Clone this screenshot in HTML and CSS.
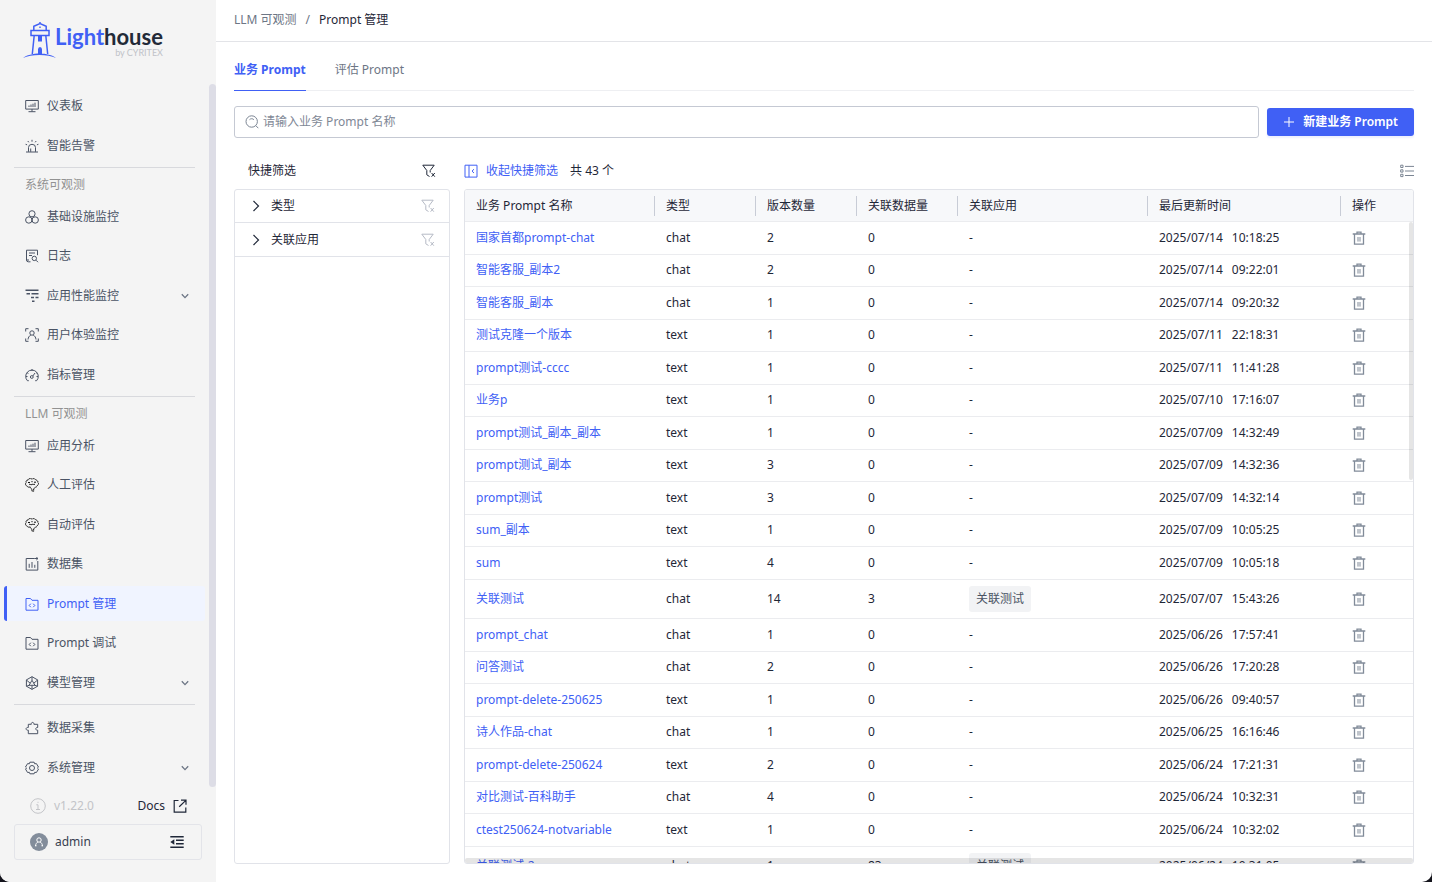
FILE: index.html
```html
<!DOCTYPE html>
<html lang="zh-CN">
<head>
<meta charset="utf-8">
<title>Prompt 管理</title>
<link rel="stylesheet" href="styles.css">
</head>
<body>
<svg class="sprite" aria-hidden="true">
  <symbol id="i-monitor" viewBox="0 0 14 14"><path d="M.7 1.500h12.600v8.600H.7zM7 10.100v2.400M3.500 12.700h7M4 8V6.500M6 8V5.500M8 8V4.700M10 8V3.700"/></symbol>
  <symbol id="i-alarm" viewBox="0 0 14 14"><path d="M1 13h12M3.500 12.800V8.500a3.500 3.200 0 0 1 7 0v4.300M5.700 12.800V9.500M7 .8v1.900M2.800 2l1 1.300M11.200 2l-1 1.300M.6 5.300l1.500.5M13.400 5.300l-1.500.5"/></symbol>
  <symbol id="i-circles" viewBox="0 0 14 14"><circle cx="7" cy="3.800" r="3.100"/><circle cx="3.800" cy="10" r="3.200"/><circle cx="10.200" cy="10" r="3.200"/></symbol>
  <symbol id="i-log" viewBox="0 0 14 14"><path d="M5.500 12.800H3.300a1.800 1.800 0 0 1-1.800-1.800V1.200h11v5M1.500 11H4M4 4h6M4 6.500h3M11 11.200l2 2"/><circle cx="9.300" cy="9.400" r="2.200"/></symbol>
  <symbol id="i-trace" viewBox="0 0 14 14"><path stroke-width="1.500" d="M.5 1.200h13M1.500 4.800h3.500M6.500 4.800h7M6 8.500h3M10.500 8.500h3M7 12.200h2.500"/></symbol>
  <symbol id="i-userscan" viewBox="0 0 14 14"><path d="M.7 3.500V.7h2.800M10.500.7h2.800v2.800M13.300 10.500v2.800h-2.800M3.500 13.300H.7v-2.800M3 11.500c.2-2 1.200-3.700 2.800-4.400M11 11.500c-.2-2-1.200-3.700-2.800-4.400"/><circle cx="7" cy="5" r="2.200"/></symbol>
  <symbol id="i-gauge" viewBox="0 0 14 14"><path d="M3.800 12.700H2.400a6.300 6.300 0 1 1 9.200 0h-1.400M7 1v2M2 4.700l1.400.8M12 4.700l-.8.500M1 8.500h1.500M13 8.500h-1.500M7.800 8l2.200-3"/><circle cx="6.800" cy="9" r="1.400"/></symbol>
  <symbol id="i-brain" viewBox="0 0 14 14"><path stroke-dasharray="1.600 .4" d="M7 1.200C5.500 0 3.500.6 3.200 1.900 1.500 1.900.6 3.300 1.200 4.500-.1 5.700.5 7.700 2 7.900c.4 1.300 2 1.700 3.200.9.200 1.600 1 2.200 1.800 2.300v2.100h1.700v-2.500c1-.3 1.500-.9 1.600-1.700 1.300.1 2.100-.7 2.100-1.700 1.500-.5 1.500-2.300.4-3 .3-1.300-.7-2.300-2-2.200C10.200.6 8.300.1 7 1.200z"/><path d="M3 4.500h2M4 6.500c1-.7 1.800.7 3 0s1.500.5 3-.3M9 4.200h2M7 3v1.200"/></symbol>
  <symbol id="i-dataset" viewBox="0 0 14 14"><path d="M9 1.500H1.200v11.600h11.600V4M9.200 1.500h3.600M11.300.2l1.700 1.300L11.300 3M4.200 6.800v4M7 5v5.800M9.800 7.800v3"/></symbol>
  <symbol id="i-folder" viewBox="0 0 14 14"><path d="M1 1.500h4.500L7 3.300h6v9.900H1zM5.800 6.700L4.200 8.500l1.600 1.700M8.200 6.700l1.600 1.800-1.600 1.700"/></symbol>
  <symbol id="i-cube" viewBox="0 0 14 14"><path d="M7 .7l5.600 3.200v6.300L7 13.400l-5.600-3.200V3.900zM7 .7v3.600M4 9.300l-2.600 1M10 9.300l2.600 1M7 4.300L4 9.300h6zM1.400 4l3.800 3.200M12.600 4L8.800 7.200M7 9.300v4"/></symbol>
  <symbol id="i-puzzle" viewBox="0 0 14 14"><path d="M3.300 3.300h3c-.5-2.500 3-2.500 2.600 0h3.800v3.200c-2.600-.3-2.600 3 0 2.700v3.500H3.300V9.200C.3 9.500.3 6.200 3.300 6.500z"/></symbol>
  <symbol id="i-gear" viewBox="0 0 14 14"><path d="M4.900 1.200h4.200l.6 1.600 1.700-.2 2.100 3.500L12.400 7l1.100 1.100-2.100 3.400-1.700-.2-.6 1.500H4.900l-.6-1.500-1.700.2L.5 8.100 1.600 7 .5 6l2.100-3.400 1.700.2z"/><circle cx="7" cy="7" r="2.500"/></symbol>
  <symbol id="i-down" viewBox="0 0 8 8"><path stroke-width="1.300" d="M.8 2.200L4 5.600l3.200-3.400"/></symbol>
  <symbol id="i-right" viewBox="0 0 12 12"><path stroke-width="1.200" d="M3.500 1l5 5-5 5"/></symbol>
  <symbol id="i-filter" viewBox="0 0 14 14"><path d="M.8 1.200h11.400L8.200 6.500v2M.8 1.200l4 5.300v4.300l2.700 1.700M9.600 9l3.200 3.700M12.800 9L9.600 12.700"/></symbol>
  <symbol id="i-trash" viewBox="0 0 14 14"><path stroke-width="1.300" d="M.7 3h12.600M5 2.800V1.200h4v1.600M2.500 3v10.200h9V3"/><path stroke-width="1" d="M6 6v4.600M8 6v4.600"/></symbol>
</svg>
<div class="app">
  <aside class="sidebar">
    <a class="logo" href="#" aria-label="Lighthouse by CYRITEX">
      <svg class="logo-mark" viewBox="0 0 34 38" aria-hidden="true">
        <path class="tower" d="M10.800 9.500V5.200L17 2.500l6.200 2.700v4.300M8 9.500h18v5H8zM11.200 14.500L9.300 33M22.800 14.500L24.700 33M17 2.500V1"/>
        <path class="solid" d="M15 15h4v5.500h-4zM15 33v-4.500a2 2.500 0 0 1 4 0V33zM16.300 5.500h1.400v1.600h-1.400zM0 37c7-6 26-6 33 0-8-4-25-4-33 0z"/>
      </svg>
      <span class="logo-text">
        <span class="logo-name"><span class="logo-light">Light</span>house</span>
        <span class="logo-by">by CYRITEX</span>
      </span>
    </a>
    <nav class="nav">
      <div class="group">
        <a class="item" href="#"><svg><use href="#i-monitor"/></svg>仪表板</a>
        <a class="item" href="#"><svg><use href="#i-alarm"/></svg>智能告警</a>
      </div>
      <div class="group">
        <h2 class="caption">系统可观测</h2>
        <a class="item" href="#"><svg><use href="#i-circles"/></svg>基础设施监控</a>
        <a class="item" href="#"><svg><use href="#i-log"/></svg>日志</a>
        <a class="item" href="#"><svg><use href="#i-trace"/></svg>应用性能监控<svg class="chev"><use href="#i-down"/></svg></a>
        <a class="item" href="#"><svg><use href="#i-userscan"/></svg>用户体验监控</a>
        <a class="item" href="#"><svg><use href="#i-gauge"/></svg>指标管理</a>
      </div>
      <div class="group">
        <h2 class="caption">LLM 可观测</h2>
        <a class="item" href="#"><svg><use href="#i-monitor"/></svg>应用分析</a>
        <a class="item" href="#"><svg class="ink"><use href="#i-brain"/></svg>人工评估</a>
        <a class="item" href="#"><svg class="ink"><use href="#i-brain"/></svg>自动评估</a>
        <a class="item" href="#"><svg><use href="#i-dataset"/></svg>数据集</a>
        <a class="item active" href="#" aria-current="page"><svg><use href="#i-folder"/></svg>Prompt 管理</a>
        <a class="item" href="#"><svg><use href="#i-folder"/></svg>Prompt 调试</a>
        <a class="item" href="#"><svg><use href="#i-cube"/></svg>模型管理<svg class="chev"><use href="#i-down"/></svg></a>
      </div>
      <div class="group last">
        <a class="item" href="#"><svg><use href="#i-puzzle"/></svg>数据采集</a>
        <a class="item" href="#"><svg><use href="#i-gear"/></svg>系统管理<svg class="chev"><use href="#i-down"/></svg></a>
      </div>
      <div class="nav-scroll"></div>
    </nav>
    <div class="meta">
      <span class="version"><svg viewBox="0 0 16 16"><circle cx="8" cy="8" r="7.300"/><path d="M6.300 6.800H8v4.500M6 11.500h4M7.500 4.300h1"/></svg>v1.22.0</span>
      <a class="docs" href="#">Docs<svg viewBox="0 0 14 14"><path d="M5.500 1.500H1.200v11.600h11.600V8.500M8 1.200h5v4.600M6.200 7.800L12.600 1.600"/></svg></a>
    </div>
    <div class="user">
      <span class="avatar"><svg viewBox="0 0 18 18"><circle cx="9" cy="7" r="2.200"/><path d="M5.500 13c.2-2.200 1.300-3.500 2.400-4M12.500 13c-.2-2.200-1.300-3.500-2.400-4M5 12.800h1.500M11.500 12.800H13"/></svg></span>
      <span>admin</span>
      <button class="fold" type="button" aria-label="收起菜单"><svg viewBox="0 0 14 14"><path d="M.3 1.700h13.400M6 5.200h7.700M6 8.700h7.700M.3 12.300h13.400"/><path class="fill" d="M.3 7l4-2.800v5.600z"/></svg></button>
    </div>
  </aside>
  <main class="main">
    <div class="crumbs"><a href="#">LLM 可观测</a><span class="slash">/</span><span class="here">Prompt 管理</span></div>
    <div class="content">
      <div class="tabs" role="tablist">
        <button class="tab on" type="button" role="tab" aria-selected="true">业务 Prompt</button>
        <button class="tab" type="button" role="tab" aria-selected="false">评估 Prompt</button>
      </div>
      <div class="search-row">
        <label class="search">
          <svg viewBox="0 0 14 14"><circle cx="6.700" cy="6.500" r="5.700"/><path d="M10.800 10.600l2.500 2.600M4.500 4.700c1-1.300 3.400-1.300 4.400 0"/></svg>
          <input type="text" placeholder="请输入业务 Prompt 名称" aria-label="请输入业务 Prompt 名称">
        </label>
        <button class="create" type="button"><svg viewBox="0 0 12 12"><path d="M6 1v10M1 6h10"/></svg>新建业务 Prompt</button>
      </div>
      <div class="columns">
        <section class="filters">
          <div class="bar filter-bar"><span>快捷筛选</span><button class="icon-btn" type="button" aria-label="清除筛选"><svg><use href="#i-filter"/></svg></button></div>
          <div class="panel">
            <div class="facet"><button class="facet-name" type="button"><svg><use href="#i-right"/></svg>类型</button><button class="icon-btn dim" type="button" aria-label="清除类型"><svg><use href="#i-filter"/></svg></button></div>
            <div class="facet"><button class="facet-name" type="button"><svg><use href="#i-right"/></svg>关联应用</button><button class="icon-btn dim" type="button" aria-label="清除关联应用"><svg><use href="#i-filter"/></svg></button></div>
          </div>
        </section>
        <section class="results">
          <div class="bar">
            <button class="collapse" type="button"><svg viewBox="0 0 14 14"><path d="M1 1.200h12v11.900H1zM5 1.200v11.900M10 5.200L8 7.100 10 9"/></svg>收起快捷筛选</button>
            <span class="count">共 43 个</span>
            <button class="icon-btn view" type="button" aria-label="列设置"><svg viewBox="0 0 14 14"><path d="M.7 1.200h2.300v2.300H.7zM.7 5.800h2.300v2.300H.7zM.7 10.300h2.300v2.300H.7zM5 2.400h9M5 7h9M5 11.500h9"/></svg></button>
          </div>
          <div class="table-wrap">
            <table class="table">
              <colgroup><col class="c-name"><col class="c-num"><col class="c-num"><col class="c-num"><col class="c-name"><col class="c-time"><col class="c-op"></colgroup>
              <thead><tr><th><div>业务 Prompt 名称</div></th><th><div>类型</div></th><th><div>版本数量</div></th><th><div>关联数据量</div></th><th><div>关联应用</div></th><th><div>最后更新时间</div></th><th><div>操作</div></th></tr></thead>
              <tbody>
                <tr><td><a href="#">国家首都prompt-chat</a></td><td>chat</td><td>2</td><td>0</td><td>-</td><td><time><span>2025/07/14</span><span>10:18:25</span></time></td><td><button class="del" type="button" aria-label="删除"><svg><use href="#i-trash"/></svg></button></td></tr>
                <tr><td><a href="#">智能客服_副本2</a></td><td>chat</td><td>2</td><td>0</td><td>-</td><td><time><span>2025/07/14</span><span>09:22:01</span></time></td><td><button class="del" type="button" aria-label="删除"><svg><use href="#i-trash"/></svg></button></td></tr>
                <tr><td><a href="#">智能客服_副本</a></td><td>chat</td><td>1</td><td>0</td><td>-</td><td><time><span>2025/07/14</span><span>09:20:32</span></time></td><td><button class="del" type="button" aria-label="删除"><svg><use href="#i-trash"/></svg></button></td></tr>
                <tr><td><a href="#">测试克隆一个版本</a></td><td>text</td><td>1</td><td>0</td><td>-</td><td><time><span>2025/07/11</span><span>22:18:31</span></time></td><td><button class="del" type="button" aria-label="删除"><svg><use href="#i-trash"/></svg></button></td></tr>
                <tr><td><a href="#">prompt测试-cccc</a></td><td>text</td><td>1</td><td>0</td><td>-</td><td><time><span>2025/07/11</span><span>11:41:28</span></time></td><td><button class="del" type="button" aria-label="删除"><svg><use href="#i-trash"/></svg></button></td></tr>
                <tr><td><a href="#">业务p</a></td><td>text</td><td>1</td><td>0</td><td>-</td><td><time><span>2025/07/10</span><span>17:16:07</span></time></td><td><button class="del" type="button" aria-label="删除"><svg><use href="#i-trash"/></svg></button></td></tr>
                <tr><td><a href="#">prompt测试_副本_副本</a></td><td>text</td><td>1</td><td>0</td><td>-</td><td><time><span>2025/07/09</span><span>14:32:49</span></time></td><td><button class="del" type="button" aria-label="删除"><svg><use href="#i-trash"/></svg></button></td></tr>
                <tr><td><a href="#">prompt测试_副本</a></td><td>text</td><td>3</td><td>0</td><td>-</td><td><time><span>2025/07/09</span><span>14:32:36</span></time></td><td><button class="del" type="button" aria-label="删除"><svg><use href="#i-trash"/></svg></button></td></tr>
                <tr><td><a href="#">prompt测试</a></td><td>text</td><td>3</td><td>0</td><td>-</td><td><time><span>2025/07/09</span><span>14:32:14</span></time></td><td><button class="del" type="button" aria-label="删除"><svg><use href="#i-trash"/></svg></button></td></tr>
                <tr><td><a href="#">sum_副本</a></td><td>text</td><td>1</td><td>0</td><td>-</td><td><time><span>2025/07/09</span><span>10:05:25</span></time></td><td><button class="del" type="button" aria-label="删除"><svg><use href="#i-trash"/></svg></button></td></tr>
                <tr><td><a href="#">sum</a></td><td>text</td><td>4</td><td>0</td><td>-</td><td><time><span>2025/07/09</span><span>10:05:18</span></time></td><td><button class="del" type="button" aria-label="删除"><svg><use href="#i-trash"/></svg></button></td></tr>
                <tr><td><a href="#">关联测试</a></td><td>chat</td><td>14</td><td>3</td><td><span class="tag">关联测试</span></td><td><time><span>2025/07/07</span><span>15:43:26</span></time></td><td><button class="del" type="button" aria-label="删除"><svg><use href="#i-trash"/></svg></button></td></tr>
                <tr><td><a href="#">prompt_chat</a></td><td>chat</td><td>1</td><td>0</td><td>-</td><td><time><span>2025/06/26</span><span>17:57:41</span></time></td><td><button class="del" type="button" aria-label="删除"><svg><use href="#i-trash"/></svg></button></td></tr>
                <tr><td><a href="#">问答测试</a></td><td>chat</td><td>2</td><td>0</td><td>-</td><td><time><span>2025/06/26</span><span>17:20:28</span></time></td><td><button class="del" type="button" aria-label="删除"><svg><use href="#i-trash"/></svg></button></td></tr>
                <tr><td><a href="#">prompt-delete-250625</a></td><td>text</td><td>1</td><td>0</td><td>-</td><td><time><span>2025/06/26</span><span>09:40:57</span></time></td><td><button class="del" type="button" aria-label="删除"><svg><use href="#i-trash"/></svg></button></td></tr>
                <tr><td><a href="#">诗人作品-chat</a></td><td>chat</td><td>1</td><td>0</td><td>-</td><td><time><span>2025/06/25</span><span>16:16:46</span></time></td><td><button class="del" type="button" aria-label="删除"><svg><use href="#i-trash"/></svg></button></td></tr>
                <tr><td><a href="#">prompt-delete-250624</a></td><td>text</td><td>2</td><td>0</td><td>-</td><td><time><span>2025/06/24</span><span>17:21:31</span></time></td><td><button class="del" type="button" aria-label="删除"><svg><use href="#i-trash"/></svg></button></td></tr>
                <tr><td><a href="#">对比测试-百科助手</a></td><td>chat</td><td>4</td><td>0</td><td>-</td><td><time><span>2025/06/24</span><span>10:32:31</span></time></td><td><button class="del" type="button" aria-label="删除"><svg><use href="#i-trash"/></svg></button></td></tr>
                <tr><td><a href="#">ctest250624-notvariable</a></td><td>text</td><td>1</td><td>0</td><td>-</td><td><time><span>2025/06/24</span><span>10:32:02</span></time></td><td><button class="del" type="button" aria-label="删除"><svg><use href="#i-trash"/></svg></button></td></tr>
                <tr><td><a href="#">关联测试-2</a></td><td>chat</td><td>1</td><td>83</td><td><span class="tag">关联测试</span></td><td><time><span>2025/06/24</span><span>10:31:05</span></time></td><td><button class="del" type="button" aria-label="删除"><svg><use href="#i-trash"/></svg></button></td></tr>
              </tbody>
            </table>
            <div class="bar-v"></div>
            <div class="bar-h"></div>
          </div>
        </section>
      </div>
    </div>
  </main>
</div>
</body>
</html>
```

FILE: styles.css
```css
* { box-sizing: border-box; }
html, body { height: 100%; }
body {
  margin: 0;
  background: #14141c;
  color: #1f2738;
  font: 12px/20px "Noto Sans", "Noto Sans CJK SC", sans-serif;
}
a { color: inherit; text-decoration: none; }
button {
  border: 0;
  padding: 0;
  background: none;
  color: inherit;
  font: inherit;
  cursor: pointer;
}
svg { display: block; width: 14px; height: 14px; fill: none; stroke: currentColor; flex: none; }
.sprite { position: absolute; width: 0; height: 0; }

.app {
  display: flex;
  height: 100vh;
  background: #fff;
  border-radius: 0 0 10px 10px;
  overflow: hidden;
}

/* Sidebar */
.sidebar {
  display: flex;
  flex-direction: column;
  flex: none;
  width: 216px;
  padding-bottom: 22px;
  background: #f4f4f4;
  color: #4a5364;
}
.logo { display: flex; height: 84px; padding: 21px 0 0 23px; flex: none; }
.logo-mark { width: 34px; height: 38px; }
.logo-mark .tower { stroke: #4060f5; stroke-width: 1.500; }
.logo-mark .solid { fill: #4060f5; stroke: none; }
.logo-text { display: flex; flex-direction: column; align-items: flex-end; padding-top: 4px; margin-left: -2px; }
.logo-name { color: #222a38; font: 700 22px/24px Lato, sans-serif; }
.logo-light { color: #4060f5; }
.logo-by { color: #c0c2c8; font: 9px/8px Lato, sans-serif; }

.nav { position: relative; flex: 1; min-height: 0; padding-top: 4px; }
.nav-scroll {
  position: absolute;
  top: 0;
  right: 0;
  bottom: 0;
  width: 7px;
  border-radius: 4px;
  background: #dddde6;
}
.group { position: relative; margin-right: 11px; }
.group::after { content: ""; display: block; height: 1px; margin: 4px 10px 0 14px; background: #d8d9dd; }
.group.last::after { display: none; }
.group.last { padding-top: 5px; }
.caption { margin: 0; padding: 7px 0 4px 25px; color: #929292; font-size: 12px; line-height: 20px; font-weight: 400; }
.group .item + .item { margin-top: 5px; }
.group .item + .item:nth-child(odd) { margin-top: 4px; }
.item {
  display: flex;
  align-items: center;
  gap: 8px;
  height: 35px;
  padding: 0 16px 0 21px;
  margin-left: 4px;
  border-radius: 3px;
}
.item.active { background: #f0f4ff; color: #4060f5; border-left: 3px solid #4060f5; padding-left: 18px; }
.item .chev { width: 8px; height: 8px; margin-left: auto; color: #6d7685; }
.item .ink { color: #111; stroke-width: 1; }

.meta { display: flex; justify-content: space-between; align-items: center; height: 37px; padding: 0 29px 0 30px; }
.version, .docs { display: flex; align-items: center; gap: 8px; }
.version { color: #c3c4c8; }
.version svg { width: 16px; height: 16px; }
.docs { color: #1f2738; }
.docs svg { stroke-width: 1.200; }
.user {
  display: flex;
  align-items: center;
  gap: 7px;
  height: 36px;
  margin: 0 14px;
  padding: 0 17px 0 15px;
  border: 1px solid #e3e4e9;
  border-radius: 3px;
  color: #384050;
}
.avatar { border-radius: 50%; background: #838d9b; color: #fff; }
.avatar svg { width: 18px; height: 18px; }
.fold { margin-left: auto; color: #1f2738; }
.fold svg { stroke-width: 1.500; }
.fold .fill { fill: currentColor; stroke: none; }

/* Main */
.main { display: flex; flex-direction: column; flex: 1; min-width: 0; }
.crumbs { display: flex; align-items: center; height: 42px; padding: 0 18px 2px; border-bottom: 1px solid #e3e4e8; color: #6d7685; }
.slash { margin: 0 9px; }
.here { color: #1f2738; }
.content { display: flex; flex-direction: column; flex: 1; min-height: 0; padding: 7px 18px 18px; }
.tabs { display: flex; gap: 29px; height: 42px; border-bottom: 1px solid #eeeff2; flex: none; }
.tab { height: 42px; padding-top: 1px; border-bottom: 1px solid transparent; color: #6d7685; }
.tab.on { color: #4060f5; border-color: #4060f5; font-weight: 700; }
.search-row { display: flex; align-items: center; gap: 8px; margin-top: 15px; }
.search {
  display: flex;
  align-items: center;
  gap: 4px;
  flex: 1;
  height: 32px;
  padding: 0 10px;
  border: 1px solid #c5c9d3;
  border-radius: 3px;
  color: #7b8593;
}
.search input { flex: 1; border: 0; outline: 0; padding: 0; background: none; color: #1f2738; font: inherit; }
.search input::placeholder { color: #7f8896; opacity: 1; }
.create {
  display: flex;
  align-items: center;
  justify-content: center;
  gap: 8px;
  height: 28px;
  padding: 0 16px;
  border-radius: 3px;
  background: #4060f5;
  box-shadow: 0 2px 2px #4060f51a;
  color: #fff;
  font-weight: 600;
}
.create svg { width: 12px; height: 12px; }

.columns { display: flex; gap: 14px; flex: 1; min-height: 0; margin-top: 15px; }
.filters, .results { display: flex; flex-direction: column; min-height: 0; }
.filters { flex: none; width: 216px; }
.results { flex: 1; min-width: 0; }
.bar { display: flex; align-items: center; height: 36px; flex: none; }
.filter-bar { justify-content: space-between; padding-left: 14px; padding-right: 14px; }
.icon-btn { line-height: 0; }
.dim { color: #b5bac5; }
.collapse { display: flex; align-items: center; gap: 8px; color: #4060f5; }
.count { margin-left: 12px; }
.view { margin-left: auto; color: #7b8593; }
.panel { flex: 1; border: 1px solid #e1e3e9; border-radius: 3px; }
.facet { display: flex; align-items: center; justify-content: space-between; height: 33px; padding: 0 14px 0 15px; border-bottom: 1px solid #e1e3e9; }
.facet + .facet { height: 34px; }
.facet-name { display: flex; align-items: center; gap: 9px; }
.facet-name svg { width: 12px; height: 12px; }

/* Table */
.table-wrap { position: relative; flex: 1; min-height: 0; border: 1px solid #e1e3e9; border-radius: 3px; overflow: hidden; }
.table { width: 100%; border-collapse: separate; border-spacing: 0; table-layout: fixed; }
.c-name { width: 190px; }
.c-num { width: 101px; }
.c-time { width: 193px; }
.c-op { width: 72px; }
th { height: 32px; padding: 0; border-bottom: 1px solid #ebecef; background: #f7f8fa; text-align: left; font-weight: 400; white-space: nowrap; }
th div { padding-left: 11px; border-right: 1px solid #c8ccd6; }
th:last-child div { border-right: 0; }
td { padding: 0 0 0 11px; border-bottom: 1px solid #ebecef; white-space: nowrap; }
tbody tr:nth-child(odd) { height: 33px; }
tbody tr:nth-child(even) { height: 32px; }
tbody tr:nth-child(even) td { padding-bottom: 1px; }
td a { color: #4060f5; }
time { display: flex; gap: 9px; }
.tag { display: block; width: max-content; margin: 6px 0 5px; padding: 3px 7px; border-radius: 3px; background: #f2f3f5; color: #4a5364; }
.del { display: block; color: #818b99; }
.bar-v, .bar-h { position: absolute; background: #0000001a; border-radius: 2px; }
.bar-v { top: 32px; right: 0; width: 4px; height: 258px; }
.bar-h { left: 0; right: 0; bottom: 0; height: 5px; }
```
